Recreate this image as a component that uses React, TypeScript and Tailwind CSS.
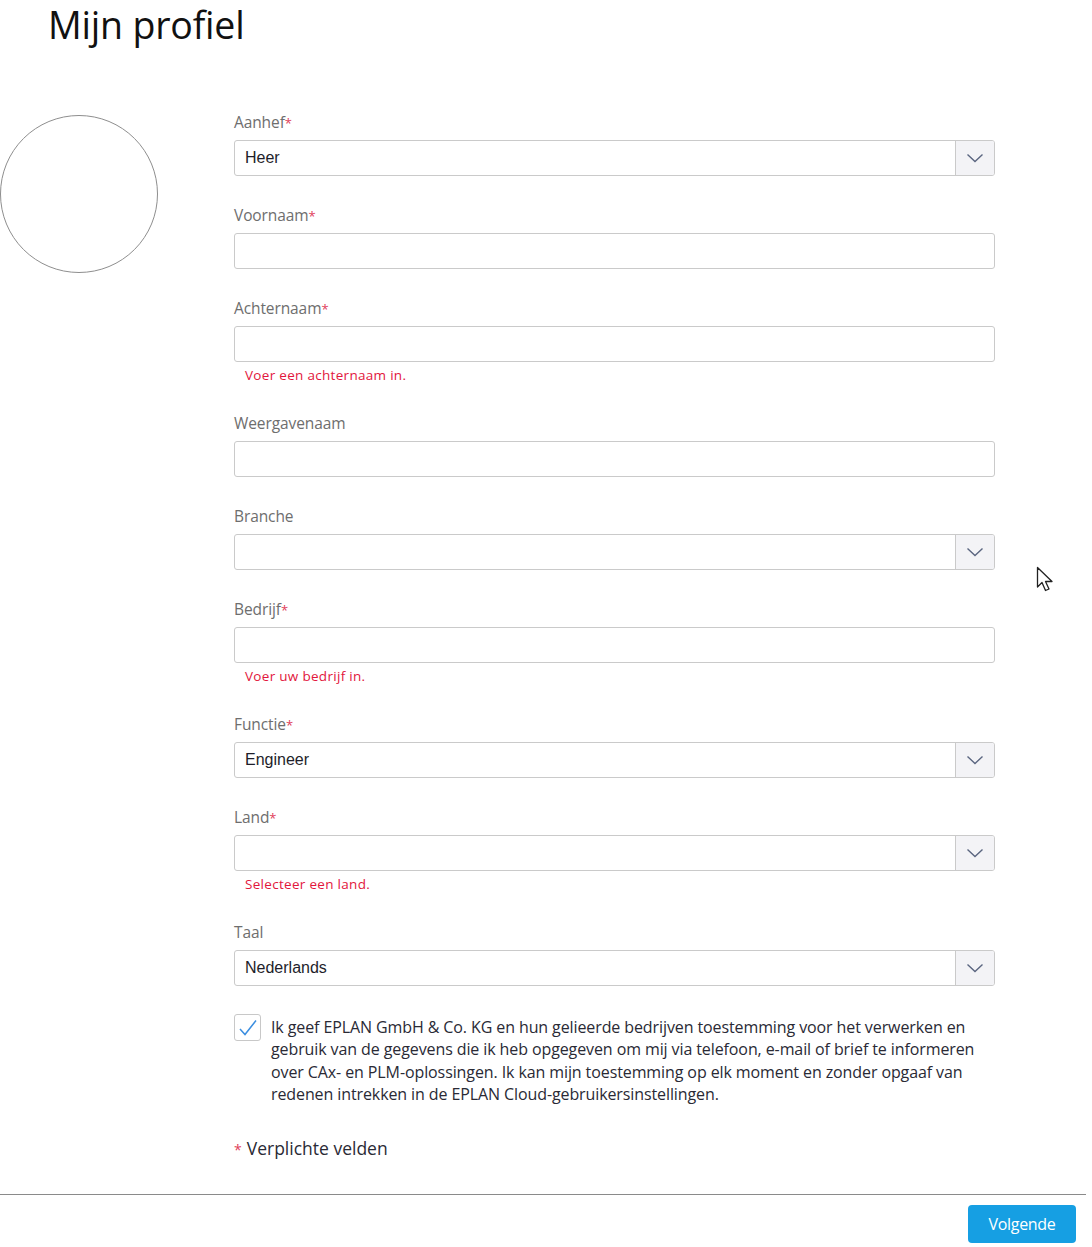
import React from "react";

const FONT = "font-['Open_Sans','Noto_Sans',sans-serif]";

type Field = {
  label: string;
  required?: boolean;
  value?: string;
  select?: boolean;
  error?: string;
};

const FIELDS: Field[] = [
  { label: "Aanhef", required: true, value: "Heer", select: true },
  { label: "Voornaam", required: true },
  { label: "Achternaam", required: true, error: "Voer een achternaam in." },
  { label: "Weergavenaam" },
  { label: "Branche", select: true },
  { label: "Bedrijf", required: true, error: "Voer uw bedrijf in." },
  { label: "Functie", required: true, value: "Engineer", select: true },
  { label: "Land", required: true, select: true, error: "Selecteer een land." },
  { label: "Taal", value: "Nederlands", select: true },
];

function Chevron() {
  return (
    <svg width="18" height="10" viewBox="0 0 18 10" fill="none">
      <path d="M1.5 1.5 L9 8.5 L16.5 1.5" stroke="#5b6680" strokeWidth="1.4" />
    </svg>
  );
}

function FormField({ f }: { f: Field }) {
  return (
    <div className="flex flex-col">
      <div className="h-5 text-[15.5px] leading-5 text-[#6e6e6e] tracking-[-0.1px]">
        {f.label}
        {f.required && <span className="text-[#e0405a] text-[13px]">*</span>}
      </div>
      <div className="mt-2 flex h-[36px] rounded-[3px] border-[1.5px] border-[#cacaca] overflow-hidden bg-white">
        <div className="flex-1 flex items-center px-[10px] font-['Liberation_Sans',Arial,sans-serif] text-[16px] text-[#1e1e2a]">
          {f.value}
        </div>
        {f.select && (
          <div className="w-[39px] flex items-center justify-center bg-[#f3f3f6] border-l-[1.5px] border-[#cacaca]">
            <Chevron />
          </div>
        )}
      </div>
      {f.error && (
        <div className="mt-[4px] pl-[11px] h-[18px] text-[13.5px] leading-[18px] tracking-[0.3px] text-[#e2163c]">
          {f.error}
        </div>
      )}
    </div>
  );
}

export default function App() {
  return (
    <div className={`relative w-[1092px] h-[1247px] bg-white ${FONT}`}>
      <h1 className="pl-[48px] pt-[2px] text-[37.5px] font-medium leading-[46px] text-[#111] tracking-[-0.2px]">
        Mijn profiel
      </h1>

      <div className="flex mt-[64px]">
        <div className="w-[234px] shrink-0">
          <div className="mt-[3px] w-[158px] h-[158px] rounded-full border-[1.5px] border-[#8e8e8e]" />
        </div>

        <div className="w-[761px] flex flex-col">
          <div className="flex flex-col gap-[29px]">
            {FIELDS.map((f) => (
              <FormField key={f.label} f={f} />
            ))}
          </div>

          <div className="mt-[28px] flex gap-[10px]">
            <div className="w-[27px] h-[27px] shrink-0 rounded-[3px] border-[1.5px] border-[#c8c8c8] flex items-center justify-center">
              <svg width="20" height="18" viewBox="0 0 20 18" fill="none">
                <path d="M2 10 L7 15.5 L18 1.5" stroke="#3b8ee0" strokeWidth="1.5" />
              </svg>
            </div>
            <p className="mt-[2px] text-[16px] leading-[22.4px] text-[#2a2a35] pr-[14px] tracking-[-0.1px]">
              Ik geef EPLAN GmbH &amp; Co. KG en hun gelieerde bedrijven toestemming voor het verwerken en
              gebruik van de gegevens die ik heb opgegeven om mij via telefoon, e-mail of brief te informeren
              over CAx- en PLM-oplossingen. Ik kan mijn toestemming op elk moment en zonder opgaaf van
              redenen intrekken in de EPLAN Cloud-gebruikersinstellingen.
            </p>
          </div>

          <div className="mt-[30px] text-[17.5px] leading-6 text-[#2a2a35]">
            <span className="text-[#e0405a] text-[14px] mr-[5px]">*</span>
            Verplichte velden
          </div>
        </div>
      </div>

      <div className="mt-[32px] mr-[6px] h-[1.5px] bg-[#8a8a8a]" />

      <div className="flex justify-end pr-[16px] mt-[10px]">
        <button className="w-[108px] h-[38px] rounded-[4px] bg-[#169fe3] text-white text-[16px] font-medium tracking-[-0.3px]">
          Volgende
        </button>
      </div>

      <svg
        className="absolute left-[1036px] top-[566px]"
        width="20"
        height="30"
        viewBox="0 0 20 30"
        fill="none"
      >
        <path
          d="M1.5 1.5 L1.5 21 L6 16.5 L9.5 24.5 L13 23 L9.5 15.5 L16 15.5 Z"
          fill="white"
          stroke="#222"
          strokeWidth="1.3"
          strokeLinejoin="round"
        />
      </svg>
    </div>
  );
}
